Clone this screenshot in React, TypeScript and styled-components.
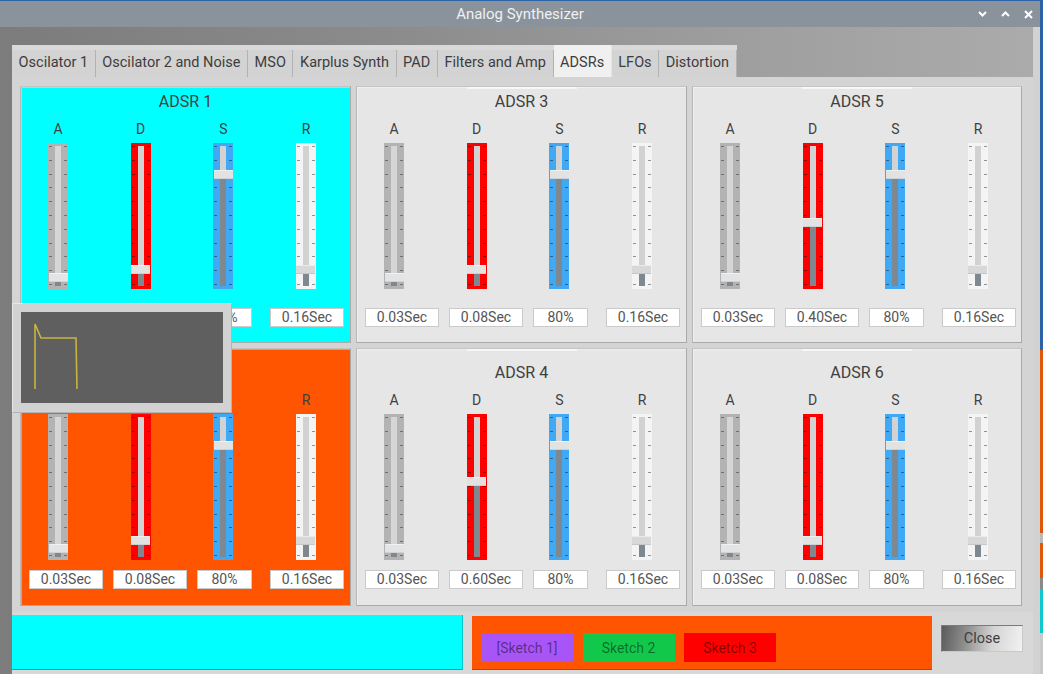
import React from 'react';
import styled, { createGlobalStyle } from 'styled-components';

const GlobalStyle = createGlobalStyle`
  html, body { margin: 0; padding: 0; }
  body {
    background: #2c62a6;
    font-family: Roboto, "Liberation Sans", sans-serif;
    overflow: hidden;
  }
  * { box-sizing: border-box; }
`;

const Desktop = styled.div`
  width: 1043px;
  height: 674px;
  display: flex;
  padding-top: 1px;
`;

const Window = styled.div`
  position: relative;
  width: 1040px;
  height: 673px;
  display: flex;
  flex-direction: column;
`;

const EdgeStrip = styled.div`
  width: 3px;
  display: flex;
  flex-direction: column;
`;

const EdgeSeg = styled.div<{ $c: string; $h: number }>`
  height: ${(p) => p.$h}px;
  background: ${(p) => p.$c};
  flex-shrink: 0;
`;

const TitleBar = styled.div`
  height: 26px;
  background: #8a939c;
  display: grid;
  grid-template-columns: 1fr auto 1fr;
  align-items: center;
`;

const TitleText = styled.div`
  grid-column: 2;
  color: #eef0f2;
  font-size: 15px;
  line-height: 17px;
`;

const Controls = styled.div`
  grid-column: 3;
  justify-self: end;
  display: flex;
  align-items: center;
  gap: 14px;
  padding-right: 7px;
`;

const Body = styled.div`
  flex: 1;
  display: flex;
  flex-direction: column;
  padding: 18px 0 0 12px;
  border-right: 7px solid #d2d2d2;
  background: linear-gradient(to right, #7c7c7c 0%, #8a8a8a 35%, #a0a0a0 75%, #ababab 100%);
`;

const TabBar = styled.div`
  align-self: flex-start;
  display: flex;
  align-items: flex-end;
  height: 32px;
  background: #d9d9d9;
`;

const Tab = styled.div<{ $active?: boolean }>`
  height: ${(p) => (p.$active ? 32 : 27)}px;
  padding: 0 6.6px 6px;
  display: flex;
  align-items: flex-end;
  font-size: 14.5px;
  line-height: 16px;
  color: #3d3d3d;
  white-space: nowrap;
  background: ${(p) => (p.$active ? '#f0f0f0' : '#d3d3d3')};
  border-right: 1px solid ${(p) => (p.$active ? '#e4e4e4' : '#b2b2b2')};
`;

const Pane = styled.div`
  background: #d4d4d4;
  padding: 9px 0 6px 8px;
`;

const Grid = styled.div`
  display: grid;
  grid-template-columns: 331px 331px 330px;
  column-gap: 5px;
  row-gap: 5px;
`;

const Panel = styled.section<{ $bg: string; $padTop: number; $padBottom: number; $plain: boolean }>`
  background: ${(p) =>
    p.$plain
      ? `linear-gradient(#f6f6f6, #f6f6f6) center top / 110px 2px no-repeat, ${p.$bg}`
      : p.$bg};
  border: 1px solid #a9a9a9;
  border-top-color: #c4c4c4;
  border-left-color: #b8b8b8;
  box-shadow: inset 1px 1px 0 rgba(255, 255, 255, 0.35);
  padding: ${(p) => p.$padTop}px 0 ${(p) => p.$padBottom}px;
  display: flex;
  flex-direction: column;
`;

const PanelTitle = styled.div`
  text-align: center;
  font-size: 16px;
  line-height: 19px;
  color: #404040;
  margin-bottom: 10px;
`;

const Channels = styled.div`
  display: grid;
  grid-template-columns: repeat(4, 70px);
  column-gap: 12.67px;
  padding-left: 2px;
`;

const Channel = styled.div`
  display: flex;
  flex-direction: column;
  align-items: center;
`;

const Letter = styled.div`
  font-size: 14px;
  line-height: 16px;
  color: #404040;
  margin-bottom: 6px;
`;

const Slider = styled.div<{ $bg: string; $tick: string }>`
  width: 20px;
  height: 146px;
  padding: 3px 0;
  display: flex;
  flex-direction: column;
  align-items: center;
  background-color: ${(p) => p.$bg};
  background-image: repeating-linear-gradient(to bottom, ${(p) => p.$tick} 0 1px, transparent 1px 13.8px),
    repeating-linear-gradient(to bottom, ${(p) => p.$tick} 0 1px, transparent 1px 13.8px);
  background-size: 3px 140px, 3px 140px;
  background-position: 1px 3px, 16px 3px;
  background-repeat: no-repeat;
`;

const Groove = styled.div<{ $h: number; $c: string }>`
  width: 6px;
  height: ${(p) => p.$h}px;
  flex-shrink: 0;
  background: ${(p) => p.$c};
`;

const Handle = styled.div<{ $c: string }>`
  width: 19px;
  height: 9px;
  flex-shrink: 0;
  background: ${(p) => p.$c};
  border-top: 1px solid rgba(255, 255, 255, 0.5);
  border-bottom: 1px solid rgba(0, 0, 0, 0.08);
`;

const SubPage = styled.div`
  width: 6px;
  flex: 1;
  background: #7f878f;
`;

const ValueRow = styled.div<{ $gap: number }>`
  display: flex;
  margin-top: ${(p) => p.$gap}px;
  padding-left: 8px;
`;

const ValueBox = styled.div<{ $w: number; $ml: number }>`
  width: ${(p) => p.$w}px;
  margin-left: ${(p) => p.$ml}px;
  height: 19px;
  background: #ffffff;
  border: 1px solid #cacaca;
  font-size: 14px;
  line-height: 17px;
  color: #555555;
  text-align: center;
`;

const BottomRow = styled.div`
  flex: 1;
  display: flex;
  align-items: flex-start;
  padding-top: 3px;
  background: #d8d8d8;
`;

const CyanBox = styled.div`
  width: 451px;
  height: 55px;
  background: #00ffff;
  border-bottom: 1px solid #00b4b4;
  border-right: 1px solid #00c8c8;
`;

const SketchBox = styled.div`
  width: 460px;
  height: 54px;
  margin: 1px 0 0 9px;
  background: #ff5500;
  border-bottom: 1px solid #c44200;
  display: flex;
  align-items: flex-end;
  gap: 9.5px;
  padding: 0 0 7px 9px;
`;

const SketchButton = styled.button<{ $bg: string }>`
  width: 92px;
  height: 29px;
  border: none;
  padding: 0;
  background: ${(p) => p.$bg};
  color: rgba(0, 0, 0, 0.47);
  font-family: Roboto, "Liberation Sans", sans-serif;
  font-size: 14px;
`;

const CloseButton = styled.button`
  width: 82px;
  height: 27px;
  margin: 10px 0 0 9px;
  padding: 0;
  border: 1px solid #7a7a7a;
  border-right-color: #c9c9c9;
  border-bottom-color: #c9c9c9;
  background: linear-gradient(100deg, #5a5a5a 0%, #8e8e8e 30%, #d4d4d4 62%, #f2f2f2 100%);
  color: #3e3e3e;
  font-family: Roboto, "Liberation Sans", sans-serif;
  font-size: 14.5px;
`;

const Popup = styled.div`
  position: absolute;
  left: 12px;
  top: 302px;
  width: 220px;
  height: 110px;
  padding: 8px;
  background: #d2d2d2;
  border: 1px solid #e6e6e6;
  border-right-color: #b4b4b4;
  border-bottom-color: #b4b4b4;
`;

const Scope = styled.svg`
  display: block;
  background: #5f5f5f;
`;

type SliderSpec = { bg: string; tick: string; groove: string; handle: string };

const sliderSpecs: SliderSpec[] = [
  { bg: '#b3b3b3', tick: 'rgba(0,0,0,0.38)', groove: '#d6d6d6', handle: '#e4e4e4' },
  { bg: '#ff0000', tick: 'rgba(0,0,0,0.4)', groove: '#d2d2d2', handle: '#e2e2e2' },
  { bg: '#3fa9f5', tick: 'rgba(0,0,0,0.4)', groove: '#d2d2d2', handle: '#e2e2e2' },
  { bg: '#f4f4f4', tick: 'rgba(0,0,0,0.4)', groove: '#d2d2d2', handle: '#d8d8d8' },
];

const letters = ['A', 'D', 'S', 'R'];
const boxLayout = [
  { w: 74, ml: 0 },
  { w: 74, ml: 10 },
  { w: 55, ml: 10 },
  { w: 74, ml: 18 },
];

type PanelSpec = {
  name: string;
  bg: string;
  plain: boolean;
  row: 1 | 2;
  handles: number[];
  values: string[];
};

const panels: PanelSpec[] = [
  { name: 'ADSR 1', bg: '#00ffff', plain: false, row: 1, handles: [130, 122, 27, 122], values: ['0.03Sec', '0.08Sec', '80%', '0.16Sec'] },
  { name: 'ADSR 3', bg: '#e6e6e6', plain: true, row: 1, handles: [130, 122, 27, 122], values: ['0.03Sec', '0.08Sec', '80%', '0.16Sec'] },
  { name: 'ADSR 5', bg: '#e6e6e6', plain: true, row: 1, handles: [130, 75, 27, 122], values: ['0.03Sec', '0.40Sec', '80%', '0.16Sec'] },
  { name: 'ADSR 2', bg: '#ff5500', plain: false, row: 2, handles: [130, 122, 27, 122], values: ['0.03Sec', '0.08Sec', '80%', '0.16Sec'] },
  { name: 'ADSR 4', bg: '#e6e6e6', plain: true, row: 2, handles: [130, 63, 27, 122], values: ['0.03Sec', '0.60Sec', '80%', '0.16Sec'] },
  { name: 'ADSR 6', bg: '#e6e6e6', plain: true, row: 2, handles: [130, 122, 27, 122], values: ['0.03Sec', '0.08Sec', '80%', '0.16Sec'] },
];

const tabs = ['Oscilator 1', 'Oscilator 2 and Noise', 'MSO', 'Karplus Synth', 'PAD', 'Filters and Amp', 'ADSRs', 'LFOs', 'Distortion'];

function AdsrPanel({ p }: { p: PanelSpec }) {
  const row1 = p.row === 1;
  return (
    <Panel $bg={p.bg} $plain={p.plain} $padTop={row1 ? 5 : 14} $padBottom={row1 ? 15 : 16}>
      <PanelTitle>{p.name}</PanelTitle>
      <Channels>
        {letters.map((l, i) => {
          const s = sliderSpecs[i];
          return (
            <Channel key={l}>
              <Letter>{l}</Letter>
              <Slider $bg={s.bg} $tick={s.tick}>
                <Groove $h={p.handles[i] - 3} $c={s.groove} />
                <Handle $c={s.handle} />
                <SubPage />
              </Slider>
            </Channel>
          );
        })}
      </Channels>
      <ValueRow $gap={row1 ? 19 : 10}>
        {p.values.map((v, i) => (
          <ValueBox key={i} $w={boxLayout[i].w} $ml={boxLayout[i].ml}>
            {v}
          </ValueBox>
        ))}
      </ValueRow>
    </Panel>
  );
}

export default function App() {
  return (
    <>
      <GlobalStyle />
      <Desktop>
        <Window>
          <TitleBar>
            <TitleText>Analog Synthesizer</TitleText>
            <Controls>
              <svg width="9" height="8" viewBox="0 0 9 8">
                <polyline points="1,2 4.5,5.5 8,2" fill="none" stroke="#ffffff" strokeWidth="2" />
              </svg>
              <svg width="9" height="8" viewBox="0 0 9 8">
                <polyline points="1,6 4.5,2.5 8,6" fill="none" stroke="#ffffff" strokeWidth="2" />
              </svg>
              <svg width="9" height="9" viewBox="0 0 9 9">
                <path d="M1 1 L8 8 M8 1 L1 8" fill="none" stroke="#ffffff" strokeWidth="2" />
              </svg>
            </Controls>
          </TitleBar>
          <Body>
            <TabBar>
              {tabs.map((t) => (
                <Tab key={t} $active={t === 'ADSRs'}>
                  {t}
                </Tab>
              ))}
            </TabBar>
            <Pane>
              <Grid>
                {panels.map((p) => (
                  <AdsrPanel key={p.name} p={p} />
                ))}
              </Grid>
            </Pane>
            <BottomRow>
              <CyanBox />
              <SketchBox>
                <SketchButton $bg="#a855f7">[Sketch 1]</SketchButton>
                <SketchButton $bg="#12c84b">Sketch 2</SketchButton>
                <SketchButton $bg="#ff0000">Sketch 3</SketchButton>
              </SketchBox>
              <CloseButton>Close</CloseButton>
            </BottomRow>
          </Body>
          <Popup>
            <Scope width="202" height="91" viewBox="0 0 202 91">
              <polyline
                points="14,77 14,12 20,26 55,26 56,77"
                fill="none"
                stroke="#c9b441"
                strokeWidth="1.6"
              />
            </Scope>
          </Popup>
        </Window>
        <EdgeStrip>
          <EdgeSeg $c="#2c62a6" $h={349} />
          <EdgeSeg $c="#e0560a" $h={183} />
          <EdgeSeg $c="#b9b9b9" $h={10} />
          <EdgeSeg $c="#e0560a" $h={35} />
          <EdgeSeg $c="#8a8a8a" $h={12} />
          <EdgeSeg $c="#10c8d0" $h={43} />
          <EdgeSeg $c="#c8c8c8" $h={41} />
        </EdgeStrip>
      </Desktop>
    </>
  );
}
